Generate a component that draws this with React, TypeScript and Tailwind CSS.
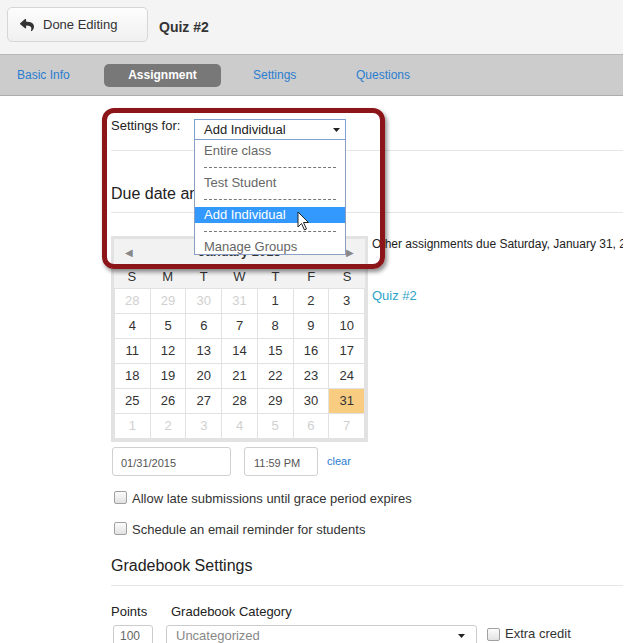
import React from "react";
import { FaReply } from "react-icons/fa";

const days: { n: number; muted?: boolean; hl?: boolean }[][] = [
  [{ n: 28, muted: true }, { n: 29, muted: true }, { n: 30, muted: true }, { n: 31, muted: true }, { n: 1 }, { n: 2 }, { n: 3 }],
  [{ n: 4 }, { n: 5 }, { n: 6 }, { n: 7 }, { n: 8 }, { n: 9 }, { n: 10 }],
  [{ n: 11 }, { n: 12 }, { n: 13 }, { n: 14 }, { n: 15 }, { n: 16 }, { n: 17 }],
  [{ n: 18 }, { n: 19 }, { n: 20 }, { n: 21 }, { n: 22 }, { n: 23 }, { n: 24 }],
  [{ n: 25 }, { n: 26 }, { n: 27 }, { n: 28 }, { n: 29 }, { n: 30 }, { n: 31, hl: true }],
  [{ n: 1, muted: true }, { n: 2, muted: true }, { n: 3, muted: true }, { n: 4, muted: true }, { n: 5, muted: true }, { n: 6, muted: true }, { n: 7, muted: true }],
];

function Checkbox() {
  return (
    <span className="inline-block w-[13px] h-[13px] rounded-[2px] border border-[#a0a0a0] bg-gradient-to-b from-[#fcfcfc] to-[#e2e2e2] shrink-0" />
  );
}

function Arrow() {
  return (
    <svg width="7" height="4" viewBox="0 0 7 4" className="shrink-0">
      <path d="M0 0 L7 0 L3.5 4 Z" fill="#222" />
    </svg>
  );
}

export default function App() {
  return (
    <div className="relative w-[640px] h-[643px] overflow-hidden bg-white font-['Liberation_Sans',Arial,sans-serif] text-[#333]">
      <div className="w-[623px]">
        {/* header */}
        <div className="h-[55px] bg-[#f4f4f4] border-b border-[#b8b8b8] flex items-start">
          <div className="ml-[7px] mt-[7px] w-[141px] h-[35px] rounded-[5px] border border-[#d6d6d6] bg-gradient-to-b from-[#fdfdfd] to-[#f0f0f0] flex items-center">
            <FaReply className="ml-[12px] text-[#333]" size={14} />
            <span className="ml-[9px] text-[13px] text-[#333]">Done Editing</span>
          </div>
          <div className="ml-[11px] mt-[17px] text-[14px] font-bold text-[#333]">Quiz #2</div>
        </div>
        {/* tabs */}
        <div className="h-[41px] bg-[#cccccc] border-b border-[#adadad] flex items-center">
          <div className="ml-[17px] w-[87px] text-[12px] text-[#2a7dd1]">Basic Info</div>
          <div className="w-[117px] h-[23px] rounded-[5px] bg-[#787878] text-white font-bold text-[12px] flex items-center justify-center">
            Assignment
          </div>
          <div className="ml-[32px] w-[103px] text-[12px] text-[#2a7dd1]">Settings</div>
          <div className="text-[12px] text-[#2a7dd1]">Questions</div>
        </div>
        {/* main */}
        <div className="pl-[111px]">
          <div className="mt-[23px] flex items-start h-[21px]">
            <div className="w-[83px] -mt-[1px] text-[13px] leading-[16px] text-[#222]">Settings for:</div>
            <div className="w-[152px] h-[21px] border border-[#7f9fd0] bg-white flex items-center pl-[9px] pr-[5px] justify-between">
              <span className="text-[13px] text-[#222]">Add Individual</span>
              <Arrow />
            </div>
          </div>
          <div className="mt-[10px] border-t border-[#e6e6e6]" />
          <div className="mt-[33px] text-[16px] leading-[20px] text-[#222]">Due date and availability</div>
          <div className="mt-[8px] border-t border-[#e6e6e6]" />
          <div className="mt-[23px] flex items-start gap-[4px]">
            <div className="w-[257px] border-[3px] border-[#e2e2e2] bg-[#f2f2f2]">
              <div className="h-[26px] flex items-center justify-between px-[11px] text-[#888]">
                <span className="text-[10px]">◀</span>
                <span className="text-[13px] font-bold text-[#333]">January 2015</span>
                <span className="text-[10px]">▶</span>
              </div>
              <div className="h-[23px] grid grid-cols-7 text-[13px] text-[#333]">
                {["S", "M", "T", "W", "T", "F", "S"].map((d, i) => (
                  <div key={i} className="flex items-center justify-center">{d}</div>
                ))}
              </div>
              <div className="bg-white border-t border-l border-[#e2e2e2]">
                {days.map((row, r) => (
                  <div key={r} className="grid grid-cols-7">
                    {row.map((c, i) => (
                      <div
                        key={i}
                        className={
                          "h-[25px] flex items-center justify-center text-[13px] border-r border-b border-[#e2e2e2] " +
                          (c.hl ? "bg-[#f8cd82] text-[#333]" : c.muted ? "text-[#d0d0d0]" : "text-[#333]")
                        }
                      >
                        {c.n}
                      </div>
                    ))}
                  </div>
                ))}
              </div>
            </div>
            <div className="flex-1 min-w-0 overflow-hidden">
              <div className="text-[12px] leading-[16px] whitespace-nowrap text-[#222]">Other assignments due Saturday, January 31, 2015</div>
              <div className="mt-[36px] text-[13px] leading-[16px] text-[#2ea3c8]">Quiz #2</div>
            </div>
          </div>
          <div className="mt-[5px] flex items-start">
            <div className="ml-[1px] w-[119px] h-[29px] border border-[#d0d0d0] rounded-[3px] flex items-center pl-[8px] pt-[3px] text-[11px] text-[#555]">01/31/2015</div>
            <div className="ml-[13px] w-[74px] h-[29px] border border-[#d0d0d0] rounded-[3px] flex items-center pl-[9px] pt-[3px] text-[11px] text-[#555]">11:59 PM</div>
            <div className="ml-[9px] mt-[6px] text-[11px] text-[#2a7dd1]">clear</div>
          </div>
          <div className="mt-[13px] h-[20px] flex items-center">
            <span className="ml-[3px]"><Checkbox /></span>
            <span className="ml-[5px] text-[13px] text-[#333]">Allow late submissions until grace period expires</span>
          </div>
          <div className="mt-[11px] h-[20px] flex items-center">
            <span className="ml-[3px]"><Checkbox /></span>
            <span className="ml-[5px] text-[13px] text-[#333]">Schedule an email reminder for students</span>
          </div>
          <div className="mt-[16px] text-[16px] leading-[20px] text-[#222]">Gradebook Settings</div>
          <div className="mt-[9px] border-t border-[#e6e6e6]" />
          <div className="mt-[18px] flex text-[13px] leading-[16px] text-[#222]">
            <span className="w-[60px]">Points</span>
            <span>Gradebook Category</span>
          </div>
          <div className="mt-[5px] flex items-start">
            <div className="ml-[2px] w-[40px] h-[22px] border border-[#ccc] rounded-[3px] flex items-center pl-[6px] text-[12px] text-[#666]">100</div>
            <div className="ml-[13px] w-[311px] h-[22px] border border-[#ccc] rounded-[3px] flex items-center justify-between pl-[9px] pr-[11px]">
              <span className="text-[13px] text-[#888]">Uncategorized</span>
              <Arrow />
            </div>
            <div className="ml-[10px] flex items-center h-[18px]">
              <Checkbox />
              <span className="ml-[5px] text-[13px] text-[#333]">Extra credit</span>
            </div>
          </div>
        </div>
      </div>

      {/* dropdown list */}
      <div className="absolute left-[194px] top-[140px] w-[152px] h-[115px] bg-white border border-[#8aa0c0] border-t-0 pt-[3px]">
        <div className="h-[16px] flex items-center pl-[9px] text-[13px] text-[#666]">Entire class</div>
        <div className="h-[16px] flex items-center px-[9px]"><div className="w-full border-t border-dashed border-[#777]" /></div>
        <div className="h-[16px] flex items-center pl-[9px] text-[13px] text-[#666]">Test Student</div>
        <div className="h-[16px] flex items-center px-[9px]"><div className="w-full border-t border-dashed border-[#777]" /></div>
        <div className="h-[16px] flex items-center pl-[9px] text-[13px] text-white bg-[#3399ff]">Add Individual</div>
        <div className="h-[16px] flex items-center px-[9px]"><div className="w-full border-t border-dashed border-[#777]" /></div>
        <div className="h-[15px] flex items-center pl-[9px] text-[13px] text-[#666]">Manage Groups</div>
      </div>

      {/* cursor */}
      <svg className="absolute left-[297px] top-[211px]" width="14" height="21" viewBox="0 0 14 21">
        <path d="M1 1 L1 16 L4.5 12.5 L7.5 19 L9.5 18 L6.5 11.5 L11.5 11.5 Z" fill="#fff" stroke="#222" strokeWidth="1" strokeLinejoin="round" />
      </svg>

      {/* red callout */}
      <div className="absolute left-[102px] top-[108px] w-[283px] h-[161px] border-[5px] border-[#8c1519] rounded-[12px] shadow-[2px_3px_4px_rgba(0,0,0,0.45)]" />
    </div>
  );
}
